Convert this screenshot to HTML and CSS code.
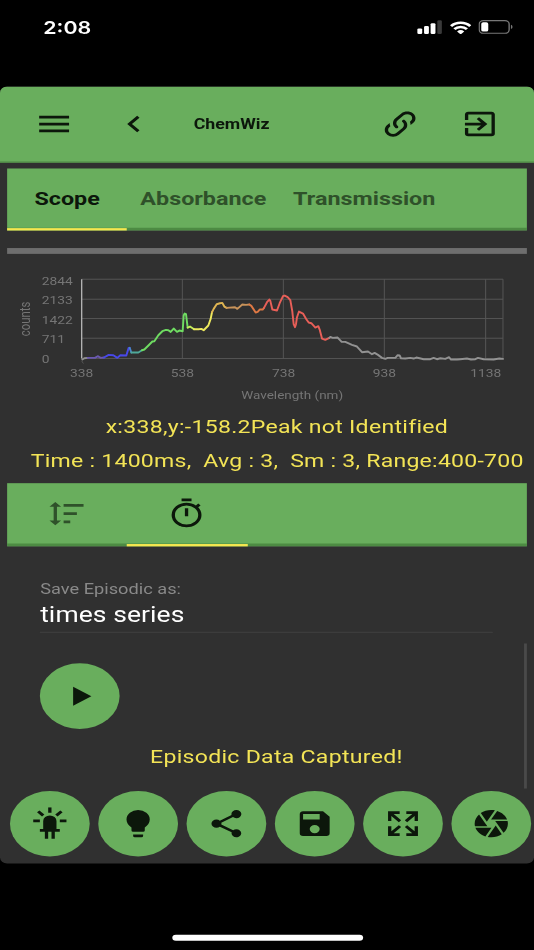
FILE: index.html
```html
<!DOCTYPE html>
<html lang="en">
<head>
    <meta charset="UTF-8">
    <meta name="viewport" content="width=device-width, initial-scale=1.0">
    <title>ChemWiz</title>
    <link rel="stylesheet" href="styles.css">
</head>
<body>
<div class="phone">
    <div class="status-bar">
        <span class="time">2:08</span>
        <svg class="signal" viewBox="0 0 17 12">
            <rect x="0" y="7.3" width="3.4" height="4.7" rx="1"/>
            <rect x="4.7" y="5.3" width="3.4" height="6.7" rx="1"/>
            <rect x="9.3" y="2.8" width="3.4" height="9.2" rx="1"/>
            <rect x="14" y="0.4" width="3.2" height="11.6" rx="1" fill="#3a3a3a"/>
        </svg>
        <svg class="wifi" viewBox="0 0 16 12">
            <g fill="none" stroke="#fff" stroke-width="2.2">
                <path d="M0.8 4.4A10 10 0 0 1 15.2 4.4"/>
                <path d="M3.3 7.2A6.5 6.5 0 0 1 12.7 7.2"/>
            </g>
            <path d="M8 12L5.3 9.3A3.9 3.9 0 0 1 10.7 9.3Z"/>
        </svg>
        <svg class="battery" viewBox="0 0 25 12">
            <rect x="0.5" y="0.5" width="21.4" height="11" rx="3" fill="none" stroke="#777"/>
            <rect x="2" y="2" width="5" height="8" rx="1.4"/>
            <path d="M23.2 4.2A2 2 0 0 1 23.2 7.8Z" fill="#777"/>
        </svg>
    </div>

    <div class="app">
        <header class="app-header">
            <svg class="icon menu" viewBox="0 0 24 24"><path d="M3,6H21V8H3V6M3,11H21V13H3V11M3,16H21V18H3V16Z"/></svg>
            <svg class="icon back" viewBox="0 0 24 24"><path d="M15.41,16.58L10.83,12L15.41,7.41L14,6L8,12L14,18L15.41,16.58Z"/></svg>
            <h1>ChemWiz</h1>
            <svg class="icon link" viewBox="0 0 24 24"><path d="M10.59,13.41C11,13.8 11,14.44 10.59,14.83C10.2,15.22 9.56,15.22 9.17,14.83C7.22,12.88 7.22,9.71 9.17,7.76V7.76L12.71,4.22C14.66,2.27 17.83,2.27 19.78,4.22C21.73,6.17 21.73,9.34 19.78,11.29L18.29,12.78C18.3,11.96 18.17,11.14 17.89,10.36L18.36,9.88C19.54,8.71 19.54,6.81 18.36,5.64C17.19,4.46 15.29,4.46 14.12,5.64L10.59,9.17C9.41,10.34 9.41,12.24 10.59,13.41M13.41,9.17C13.8,8.78 14.44,8.78 14.83,9.17C16.78,11.12 16.78,14.29 14.83,16.24V16.24L11.29,19.78C9.34,21.73 6.17,21.73 4.22,19.78C2.27,17.83 2.27,14.66 4.22,12.71L5.71,11.22C5.7,12.04 5.83,12.86 6.11,13.65L5.64,14.12C4.46,15.29 4.46,17.19 5.64,18.36C6.81,19.54 8.71,19.54 9.88,18.36L13.41,14.83C14.59,13.66 14.59,11.76 13.41,10.59C13,10.2 13,9.56 13.41,9.17Z"/></svg>
            <svg class="icon exit" viewBox="0 0 24 24"><path d="M19,3H5C3.89,3 3,3.89 3,5V9H5V5H19V19H5V15H3V19A2,2 0 0,0 5,21H19A2,2 0 0,0 21,19V5C21,3.89 20.1,3 19,3M10.08,15.58L11.5,17L16.5,12L11.5,7L10.08,8.41L12.67,11H3V13H12.67L10.08,15.58Z"/></svg>
        </header>

        <nav class="tabs">
            <div class="tab active">Scope</div>
            <div class="tab absorbance">Absorbance</div>
            <div class="tab transmission">Transmission</div>
        </nav>

        <div class="progress"></div>

        <svg class="chart" viewBox="0 0 375 133.4">
            <g transform="translate(0 9.4) scale(.23408 .28491)" fill="none">
                <!-- grid -->
                <path class="grid" d="M245 43H1509M245 103H1509M245 161H1509M245 220H1509M245 281H1509M547 43V281M850 43V281M1153 43V281M1457 43V281M1509 43V281"/>
                <path class="axis" d="M245 43V281"/>
                <path class="grid" d="M245 288L250 296"/>
                <!-- spectrum, one path per colour band -->
                <g class="line">
                    <path stroke="#8f8f8f" d="M247 284L253 280L263 279"/>
                    <path stroke="#6a58b0" d="M263 279L285 279L293 274L302 279L312 278"/>
                    <path stroke="#4848e8" d="M312 278L326 270L340 271L352 279L361 271L379 272L386 249L389 249"/>
                    <path stroke="#4a86c8" d="M389 249L394 263"/>
                    <path stroke="#4fa99a" d="M394 263L415 263L426 256"/>
                    <path stroke="#6fdc62" d="M426 256L433 254L446 241L457 230L463 229L475 211L487 199L498 195L505 196L512 201L521 191L531 201L538 197L548 199L551 152L554 146L558 148L563 188"/>
                    <path stroke="#c4ee5c" d="M563 188L570 185L582 193"/>
                    <path stroke="#eeea5e" d="M582 193L596 193L604 192L611 196L625 182L632 162L636 142"/>
                    <path stroke="#e0b552" d="M636 142L641 132L650 118L660 115L667 114L673 125L680 129"/>
                    <path stroke="#c8935a" d="M680 129L705 127L712 132L727 119L738 120L748 119"/>
                    <path stroke="#de7844" d="M748 119L754 123L767 143L773 141L779 134L788 134L792 129"/>
                    <path stroke="#e85f58" d="M792 129L801 112L808 104L811 108L817 134L831 137L839 115L849 94L854 92L863 97L871 106L877 140L881 178L885 187L888 178L891 157L897 140L909 146L919 163L926 173L934 175L946 188L955 184L959 194L966 221L976 225L988 219"/>
                    <path stroke="#929292" d="M988 219L991 216L998 219L1013 218L1025 231L1036 231L1056 240L1071 245L1086 262L1104 260L1116 268L1124 264L1134 270L1146 279L1156 282L1163 279L1186 279L1193 271L1199 272L1203 280L1216 281L1231 279L1241 281L1249 278L1259 280L1271 283L1291 283L1301 279L1311 283L1321 280L1336 282L1347 277L1353 284L1371 284L1381 283L1401 281L1413 284L1426 283L1434 279L1451 283L1481 284L1498 281L1509 282"/>
                </g>
            </g>
            <g class="labels">
                <text x="29.3" y="26.2">2844</text>
                <text x="29.3" y="43">2133</text>
                <text x="29.3" y="59.8">1422</text>
                <text x="29.3" y="76.4">711</text>
                <text x="29.3" y="93.4">0</text>
                <g text-anchor="middle">
                    <text x="57.3" y="105.6">338</text>
                    <text x="128" y="105.6">538</text>
                    <text x="199.2" y="105.6">738</text>
                    <text x="269.9" y="105.6">938</text>
                    <text x="341.2" y="105.6">1138</text>
                    <text class="x-title" x="205.2" y="124.2">Wavelength (nm)</text>
                    <text class="y-title" transform="translate(21.2 55.6) rotate(-90)">counts</text>
                </g>
            </g>
        </svg>

        <p class="readout peak">x:338,y:-158.2Peak not Identified</p>
        <p class="readout settings">Time : 1400ms,&nbsp; Avg : 3,&nbsp; Sm : 3, Range:400-700</p>

        <nav class="tabs icon-tabs">
            <div class="tab">
                <svg class="icon" viewBox="0 0 24 24"><path d="M10,13V11H18V13H10M10,19V17H14V19H10M10,7V5H22V7H10M6,17H8.5L5,20.5L1.5,17H4V7H1.5L5,3.5L8.5,7H6V17Z"/></svg>
            </div>
            <div class="tab active">
                <svg class="icon" viewBox="0 0 24 24"><path d="M12,20A7,7 0 0,1 5,13A7,7 0 0,1 12,6A7,7 0 0,1 19,13A7,7 0 0,1 12,20M19.03,7.39L20.45,5.97C20,5.46 19.55,5 19.04,4.56L17.62,6C16.07,4.74 14.12,4 12,4A9,9 0 0,0 3,13A9,9 0 0,0 12,22C17,22 21,17.97 21,13C21,10.88 20.26,8.93 19.03,7.39M11,14H13V8H11M15,1H9V3H15V1Z"/></svg>
            </div>
        </nav>

        <div class="episodic">
            <div class="field">
                <div class="field-label">Save Episodic as:</div>
                <div class="field-value">times series</div>
            </div>
            <div class="fab play">
                <svg class="icon" viewBox="0 0 24 24"><path d="M8,5.14V19.14L19,12.14L8,5.14Z"/></svg>
            </div>
            <p class="message">Episodic Data Captured!</p>
            <div class="scrollbar"></div>
        </div>

        <footer class="actions">
            <div class="fab"><svg class="icon" viewBox="0 0 24 24"><path d="M11,0V4H13V0H11M18.3,2.29L15.24,5.29L16.64,6.71L19.7,3.71L18.3,2.29M5.71,2.29L4.29,3.71L7.29,6.71L8.71,5.29L5.71,2.29M12,6A4,4 0 0,0 8,10V16H6V18H9V23H11V18H13V23H15V18H18V16H16V10A4,4 0 0,0 12,6M2,9V11H6V9H2M18,9V11H22V9H18Z"/></svg></div>
            <div class="fab"><svg class="icon" viewBox="0 0 24 24"><path d="M12,2A7,7 0 0,0 5,9C5,11.38 6.19,13.47 8,14.74V17A1,1 0 0,0 9,18H15A1,1 0 0,0 16,17V14.74C17.81,13.47 19,11.38 19,9A7,7 0 0,0 12,2M9,21A1,1 0 0,0 10,22H14A1,1 0 0,0 15,21V20H9V21Z"/></svg></div>
            <div class="fab"><svg class="icon" viewBox="0 0 24 24"><path d="M18,16.08C17.24,16.08 16.56,16.38 16.04,16.85L8.91,12.7C8.96,12.47 9,12.24 9,12C9,11.76 8.96,11.53 8.91,11.3L15.96,7.19C16.5,7.69 17.21,8 18,8A3,3 0 0,0 21,5A3,3 0 0,0 18,2A3,3 0 0,0 15,5C15,5.24 15.04,5.47 15.09,5.7L8.04,9.81C7.5,9.31 6.79,9 6,9A3,3 0 0,0 3,12A3,3 0 0,0 6,15C6.79,15 7.5,14.69 8.04,14.19L15.16,18.34C15.11,18.55 15.08,18.77 15.08,19C15.08,20.61 16.39,21.91 18,21.91C19.61,21.91 20.92,20.61 20.92,19A2.92,2.92 0 0,0 18,16.08Z"/></svg></div>
            <div class="fab"><svg class="icon" viewBox="0 0 24 24"><path d="M15,9H5V5H15M12,19A3,3 0 0,1 9,16A3,3 0 0,1 12,13A3,3 0 0,1 15,16A3,3 0 0,1 12,19M17,3H5C3.89,3 3,3.9 3,5V19A2,2 0 0,0 5,21H19A2,2 0 0,0 21,19V7L17,3Z"/></svg></div>
            <div class="fab"><svg class="icon" viewBox="0 0 24 24"><path d="M9.5,13.09L10.91,14.5L6.41,19H10V21H3V14H5V17.59L9.5,13.09M10.91,9.5L9.5,10.91L5,6.41V10H3V3H10V5H6.41L10.91,9.5M14.5,13.09L19,17.59V14H21V21H14V19H17.59L13.09,14.5L14.5,13.09M13.09,9.5L17.59,5H14V3H21V10H19V6.41L14.5,10.91L13.09,9.5Z"/></svg></div>
            <div class="fab"><svg class="icon" viewBox="0 0 24 24"><path d="M13.73,15L9.83,21.76C10.53,21.91 11.25,22 12,22C14.4,22 16.6,21.15 18.32,19.75L14.66,13.4M2.46,15C3.38,17.92 5.61,20.26 8.45,21.34L12.12,15M8.54,12L4.64,5.25C3,7 2,9.39 2,12C2,12.68 2.07,13.35 2.2,14H9.69M21.8,10H14.31L14.6,10.5L19.36,18.75C21,16.97 22,14.6 22,12C22,11.31 21.93,10.64 21.8,10M21.54,9C20.62,6.07 18.39,3.74 15.55,2.66L11.88,9M9.4,10.5L14.17,2.24C13.47,2.09 12.75,2 12,2C9.6,2 7.4,2.84 5.68,4.25L9.34,10.6L9.4,10.5Z"/></svg></div>
        </footer>
    </div>

    <div class="home-indicator"></div>
</div>
</body>
</html>
```

FILE: styles.css
```css
* {
    box-sizing: border-box;
}
html {
    height: 950px;
    background: #000;
}
body {
    height: 950px;
    margin: 0;
    overflow: hidden;
    font-family: Roboto, sans-serif;
}
/* 375x812 screen stretched over the 534x950 window */
.phone {
    display: flex;
    flex-direction: column;
    width: 375px;
    height: 812px;
    transform: scale(1.424, 1.16995);
    transform-origin: 0 0;
}
svg {
    display: block;
    flex: none;
}
h1, p {
    margin: 0;
}

/* status bar */
.status-bar {
    display: flex;
    align-items: center;
    flex: none;
    height: 73.8px;
    padding: 0 14.5px 27.2px 30.4px;
    color: #fff;
    fill: #fff;
}
.time {
    flex: 1;
    font-family: Inter, sans-serif;
    font-size: 15px;
    font-weight: 600;
}
.signal {
    width: 17.2px;
    height: 12px;
    overflow: visible;
    margin-right: 5.4px;
}
.wifi {
    width: 15px;
    height: 11.6px;
    margin-right: 5.2px;
}
.battery {
    width: 24.6px;
    height: 12px;
}

/* app */
.app {
    display: flex;
    flex-direction: column;
    flex: none;
    height: 664.6px;
    background: #303030;
    border-radius: 5px;
    overflow: hidden;
}
.icon {
    width: 28px;
    height: 28px;
    fill: #0c170b;
}
.app-header {
    display: flex;
    align-items: center;
    flex: none;
    height: 65.4px;
    padding: 0 23.6px;
    background: #69ae5d;
    border-bottom: 0.8px solid #4f8a45;
}
.app-header .back {
    margin-left: 28.8px;
}
.app-header h1 {
    flex: 1;
    margin-left: 27.6px;
    font-size: 12.5px;
    font-weight: 700;
    color: #0c170b;
}
.app-header .exit {
    margin-left: 28.3px;
}

.tabs {
    display: flex;
    flex: none;
    height: 53.6px;
    margin: 4.6px 5px 0;
    background: #69ae5d;
    box-shadow: inset 0 -2.4px #4d8b43;
}
.tab {
    display: flex;
    align-items: center;
    justify-content: center;
    width: 84.3px;
    border-bottom: 2.4px solid transparent;
    font-size: 16.4px;
    font-weight: 700;
    color: #2f512a;
}
.tab .icon {
    fill: #2f512a;
}
.tab.active {
    border-color: #f5e750;
    color: #0c170b;
}
.tab.active .icon {
    fill: #0c170b;
}
.tab.absorbance {
    width: 107px;
}
.tab.transmission {
    width: 119px;
}

.progress {
    flex: none;
    height: 4.9px;
    margin: 14.6px 5px 0;
    background: #6e6e6e;
}

/* spectrum chart */
.chart {
    width: 375px;
    height: 133.4px;
}
.grid {
    stroke: #555;
    stroke-width: 3;
}
.axis {
    stroke: #b5b5b5;
    stroke-width: 4;
}
.line {
    stroke-width: 5.8;
    stroke-linejoin: round;
    stroke-linecap: round;
}
.labels {
    fill: #757575;
    font-size: 9.7px;
}
.x-title {
    font-size: 9.5px;
}

.readout {
    flex: none;
    height: 29.2px;
    line-height: 29.8px;
    font-size: 16.2px;
    letter-spacing: 0.17px;
    color: #f3e456;
    white-space: nowrap;
}
.peak {
    padding-left: 74.2px;
    letter-spacing: 0.2px;
}
.settings {
    padding-left: 21.6px;
}

/* episodic panel */
.episodic {
    position: relative;
    flex: none;
    height: 209.6px;
    padding: 26.4px 28.2px 0;
}
.field {
    width: 318px;
    height: 48.1px;
    border-bottom: 0.9px solid #3e3e3e;
}
.field-label {
    height: 20px;
    line-height: 21px;
    font-size: 12.8px;
    color: #898989;
}
.field-value {
    height: 26px;
    line-height: 27.6px;
    font-size: 18.6px;
    letter-spacing: 0.05px;
    color: #fff;
}
.fab {
    display: flex;
    align-items: center;
    justify-content: center;
    flex: none;
    width: 56px;
    height: 56px;
    border-radius: 50%;
    background: #69ae5d;
}
.play {
    margin-top: 25.9px;
}
.message {
    margin-top: 11px;
    padding-left: 77.2px;
    line-height: 25px;
    font-size: 16.2px;
    letter-spacing: 0.2px;
    color: #f3e456;
}
.scrollbar {
    position: absolute;
    top: 83.4px;
    right: 5px;
    width: 2.2px;
    height: 124px;
    background: #4a4a4a;
}

.actions {
    display: flex;
    gap: 6.05px;
    padding-left: 7px;
}

.home-indicator {
    flex: none;
    width: 134px;
    height: 5.6px;
    margin: 60.2px auto 0;
    border-radius: 3px;
    background: #fff;
}
```
